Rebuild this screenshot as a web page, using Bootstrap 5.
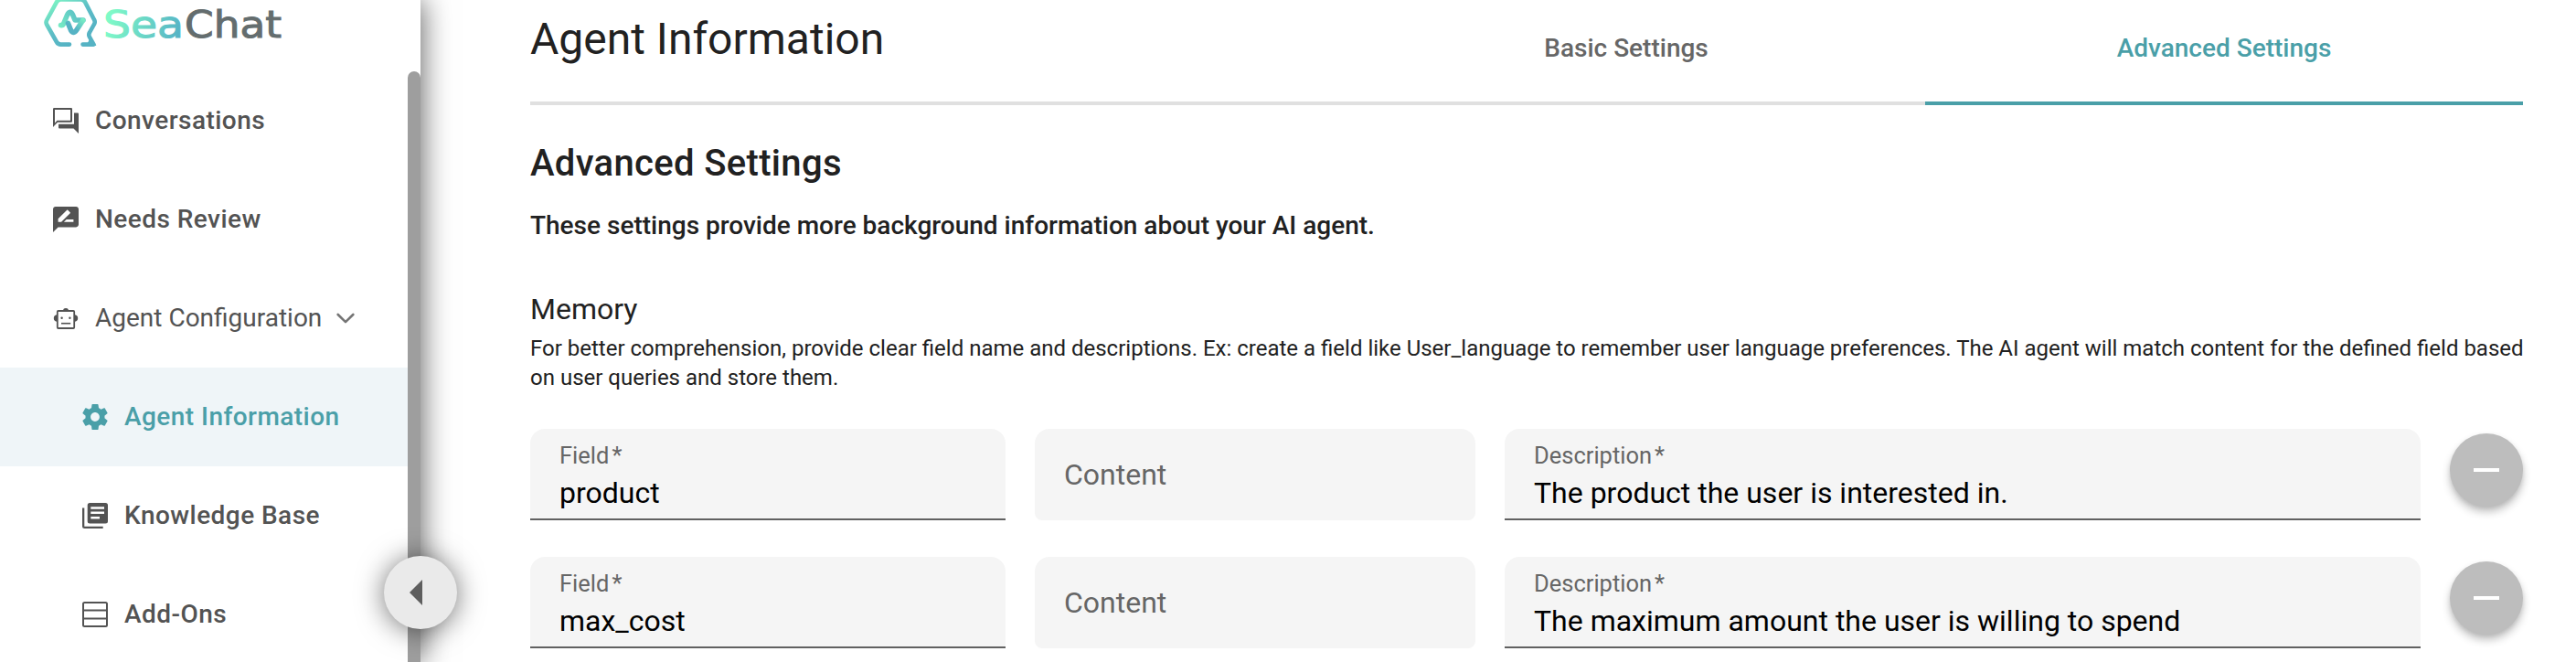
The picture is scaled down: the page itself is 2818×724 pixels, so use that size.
<!DOCTYPE html>
<html lang="en">
<head>
<meta charset="utf-8">
<title>SeaChat – Agent Information</title>
<meta name="viewport" content="width=device-width, initial-scale=1">
<link href="https://cdn.jsdelivr.net/npm/bootstrap@5.3.0/dist/css/bootstrap.min.css" rel="stylesheet">
<style>
  :root { --teal: #4a9fa8; --ink: #212121; --muted: #666; --nav: #535353; }
  body { font-family: Roboto, sans-serif; color: var(--ink); background: #fff; }
  .app { height: 724px; }

  /* Sidebar */
  .side { width: 460px; z-index: 2; background: #fff; box-shadow: 2px 0 30px rgba(0,0,0,.6); }
  .brand-row { height: 78px; padding-left: 46px; }
  .side-link { height: 108px; padding-left: 58px; gap: 18px; font-size: 28px; font-weight: 500; letter-spacing: .45px; color: var(--nav); white-space: nowrap; }
  .side-link:hover { color: var(--nav); }
  .side-link.group-toggle { font-weight: 400; letter-spacing: 0; }
  .side-link.sub { padding-left: 90px; }
  .side-link.current { background: #eff5f8; color: var(--teal); }
  .chev { margin-left: -2px; }
  .thumb { width: 14px; background: #9e9e9e; border-radius: 7px 7px 0 0; }
  .collapse-btn { width: 80px; height: 80px; right: -40px; top: 608px; background: #eaeaea; box-shadow: 0 2px 30px rgba(0,0,0,.55); }

  /* Main */
  .main { min-width: 0; padding-left: 120px; padding-right: 58px; }
  .head { height: 115px; }
  .head-title { font-size: 48px; line-height: 85px; border-bottom: 4px solid #e0e0e0; font-weight: 400; }
  .tab-item { width: 654px; padding: 0; font-size: 28px; line-height: 105px; font-weight: 500; color: var(--muted); border: 0; border-bottom: 4px solid #e0e0e0; }
  .tab-item.active { color: var(--teal); border-color: var(--teal); }
  .sec-title { font-size: 40px; line-height: 56px; font-weight: 500; letter-spacing: .33px; margin: 36px 0 20px; }
  .sec-lead { font-size: 28px; line-height: 40px; font-weight: 500; margin: 0 0 47px; }
  .sub-title { font-size: 32px; line-height: 48px; font-weight: 400; margin: 0 0 3px; }
  .hint { font-size: 24px; line-height: 32px; margin: 0 0 40px; white-space: nowrap; }
  .rows { gap: 40px; }
  .entry { display: grid; grid-template-columns: 520px 482px 1002px 80px; grid-template-rows: 100px; gap: 32px; height: 100px; }
  .fld { background: #f5f5f5; border-radius: 16px 16px 0 0; border-bottom: 2px solid #616161; padding: 15px 32px 0; white-space: nowrap; }
  .fld.off { border-bottom: 0; border-radius: 16px 16px 8px 8px; padding: 0 32px; font-size: 32px; line-height: 101px; color: var(--muted); height: 100px; }
  .fld-label { font-size: 25.5px; line-height: 28px; color: var(--muted); }
  .req { padding-left: 3px; }
  .fld-value { font-size: 32px; line-height: 54px; color: #000; }
  .minus { width: 80px; height: 80px; margin-top: 5px; background: #bdbdbd; box-shadow: 0 6px 10px rgba(0,0,0,.24), 0 2px 4px rgba(0,0,0,.08); }
</style>
</head>
<body>
<div class="app d-flex overflow-hidden">
  <aside class="side position-relative flex-shrink-0 d-flex">
    <div class="flex-grow-1">
      <div class="brand-row">
        <svg width="270" height="60" viewBox="46 0 270 60" role="img" aria-label="SeaChat">
          <defs>
            <linearGradient id="gHex" gradientUnits="userSpaceOnUse" x1="52" y1="4" x2="82" y2="44">
              <stop offset="0" stop-color="#7df6c4"/><stop offset=".6" stop-color="#5cbcc6"/><stop offset="1" stop-color="#56b3c4"/>
            </linearGradient>
            <linearGradient id="gSea" gradientUnits="userSpaceOnUse" x1="120" y1="18" x2="196" y2="40">
              <stop offset="0" stop-color="#7ffac8"/><stop offset="1" stop-color="#56b3c5"/>
            </linearGradient>
            <linearGradient id="gUp" gradientUnits="userSpaceOnUse" x1="65" y1="28" x2="82" y2="16">
              <stop offset="0" stop-color="#76ebc4"/><stop offset="1" stop-color="#60c6c6"/>
            </linearGradient>
            <linearGradient id="gDown" gradientUnits="userSpaceOnUse" x1="90" y1="20" x2="78" y2="36">
              <stop offset="0" stop-color="#78efc4"/><stop offset=".7" stop-color="#56b3c4"/>
            </linearGradient>
          </defs>
          <path d="M76 48.6H66.5Q63.5 48.6 62 46L51.2 27Q49.8 24.5 51.2 22L62 2.2Q63.5-.6 66.5-.6H88.500Q91.500-.6 93 2.200L103 21.500Q104.500 24 103 26.500L98 35.500Q96.500 38 98 40.500L102.500 48.600H90.500" fill="none" stroke="url(#gHex)" stroke-width="4.600" stroke-linecap="round" stroke-linejoin="round"/>
          <path d="M98.500 41.500L105.500 50H94.500Z" fill="#56b3c4"/>
          <path d="M66.500 27.500Q68.500 28 69.500 26L73.500 16.500Q76.500 10.500 79.500 16L82 22H91" fill="none" stroke="url(#gUp)" stroke-width="5.600" stroke-linecap="round" stroke-linejoin="round"/>
          <path d="M74.500 25.500L77.500 33Q80.500 38 84 32.500L90.500 22.500" fill="none" stroke="url(#gDown)" stroke-width="5.600" stroke-linecap="round" stroke-linejoin="round"/>
          <g font-family="DejaVu Sans, sans-serif" font-size="40" stroke-width="1">
            <text x="113" y="41" textLength="88" lengthAdjust="spacingAndGlyphs" fill="url(#gSea)" stroke="url(#gSea)">Sea</text>
            <text x="202" y="41" textLength="106" lengthAdjust="spacingAndGlyphs" fill="#646d6e" stroke="#646d6e">Chat</text>
          </g>
        </svg>
      </div>
      <nav class="nav flex-column flex-nowrap">
        <a class="side-link d-flex align-items-center text-decoration-none" href="#">
          <svg width="28" height="28" viewBox="0 0 28 28" fill="currentColor" aria-hidden="true"><path fill-rule="evenodd" d="M0 21V1.200Q0 0 1.200 0H20Q21 0 21 1.200V14.500Q21 15.700 20 15.700H5ZM2 2V16.500L4.500 13.800H19V2Z"/><path d="M23 5.500h4q1 0 1 1V28l-5.500-5.500H7q-1 0-1-1v-3.700h17z"/></svg>
          <span>Conversations</span>
        </a>
        <a class="side-link d-flex align-items-center text-decoration-none" href="#">
          <svg width="28" height="28" viewBox="2 2 20 20" fill="currentColor" aria-hidden="true"><path d="M20 2H4c-1.100 0-1.990.9-1.990 2L2 22l4-4h14c1.100 0 2-.9 2-2V4c0-1.100-.9-2-2-2zM6 14v-2.470l6.880-6.880c.2-.2.510-.2.710 0l1.770 1.770c.2.2.2.510 0 .710L8.470 14H6zm12 0h-7.500l2-2H18v2z"/></svg>
          <span>Needs Review</span>
        </a>
        <a class="side-link group-toggle d-flex align-items-center text-decoration-none" href="#">
          <svg width="28" height="28" viewBox="0 0 28 28" fill="currentColor" aria-hidden="true"><path d="M10.800 5.500a3.300 3.300 0 0 1 6.400 0zM4 10.300v7.500a3.800 3.800 0 0 1 0-7.500zM24 10.300v7.500a3.800 3.800 0 0 0 0-7.500z"/><rect x="4.800" y="6" width="18.400" height="19" rx="1" fill="none" stroke="currentColor" stroke-width="1.800"/><circle cx="9.600" cy="13.700" r="1.200"/><circle cx="18.400" cy="13.700" r="1.200"/><rect x="9" y="18.900" width="10.200" height="1.600"/></svg>
          <span>Agent Configuration</span>
          <svg class="chev" width="20" height="14" viewBox="0 0 20 14" fill="none" stroke="#757575" stroke-width="2.600" stroke-linecap="round" stroke-linejoin="round" aria-hidden="true"><path d="M1.700 3L10 11.200L18.300 3"/></svg>
        </a>
        <a class="side-link sub current d-flex align-items-center text-decoration-none" href="#">
          <svg width="28" height="28" viewBox="2 2 20 20" fill="currentColor" aria-hidden="true"><path d="M19.430 12.980c.04-.320.070-.640.070-.980s-.030-.660-.070-.980l2.110-1.650c.190-.150.240-.420.120-.640l-2-3.460c-.120-.220-.390-.300-.610-.220l-2.490 1c-.520-.400-1.080-.730-1.690-.980l-.380-2.650C14.460 2.180 14.250 2 14 2h-4c-.250 0-.460.180-.490.420l-.380 2.650c-.610.250-1.170.590-1.690.980l-2.490-1c-.230-.090-.490 0-.610.220l-2 3.460c-.130.220-.070.490.120.640l2.110 1.650c-.040.320-.070.650-.070.980s.030.660.070.980l-2.110 1.650c-.190.150-.240.420-.120.640l2 3.460c.120.220.390.300.610.220l2.490-1c.520.400 1.080.730 1.690.980l.380 2.650c.030.240.240.420.490.420h4c.250 0 .460-.180.490-.420l.380-2.650c.610-.250 1.170-.590 1.690-.980l2.490 1c.230.090.490 0 .610-.220l2-3.460c.120-.220.070-.490-.120-.640l-2.110-1.650zM12 15.500c-1.930 0-3.500-1.570-3.500-3.500s1.570-3.500 3.500-3.500 3.500 1.570 3.500 3.500-1.570 3.500-3.500 3.500z"/></svg>
          <span>Agent Information</span>
        </a>
        <a class="side-link sub d-flex align-items-center text-decoration-none" href="#">
          <svg width="28" height="28" viewBox="0 0 28 28" fill="currentColor" aria-hidden="true"><path fill-rule="evenodd" d="M8.200 0H25.500Q28 0 28 2.500V20Q28 22.500 25.500 22.500H8.200Q5.700 22.500 5.700 20V2.500Q5.700 0 8.200 0ZM9.300 4.200V6.700H24V4.200ZM9.300 9.500V12H24V9.500ZM9.300 15V17.500H19V15Z"/><path d="M0 5.500H2.300V25.700H22.700V28H2.500Q0 28 0 25.500Z"/></svg>
          <span>Knowledge Base</span>
        </a>
        <a class="side-link sub d-flex align-items-center text-decoration-none" href="#">
          <svg width="28" height="28" viewBox="0 0 28 28" fill="none" stroke="currentColor" stroke-width="2" aria-hidden="true"><rect x="1" y="1" width="26" height="26" rx="1.500"/><path d="M1 9.500H27M1 18.500H27"/></svg>
          <span>Add-Ons</span>
        </a>
      </nav>
    </div>
    <div class="d-flex" style="padding-top:78px"><div class="thumb"></div></div>
    <button class="collapse-btn btn rounded-circle border-0 p-0 position-absolute" type="button" aria-label="Collapse menu">
      <svg class="d-block" width="80" height="80" viewBox="0 0 80 80" aria-hidden="true"><path d="M28 40L42 26V54Z" fill="#5e5e5e"/></svg>
    </button>
  </aside>

  <main class="main flex-grow-1">
    <div class="head d-flex align-items-stretch">
      <h1 class="head-title flex-grow-1 m-0">Agent Information</h1>
      <div class="tab-item text-center">Basic Settings</div>
      <div class="tab-item active text-center">Advanced Settings</div>
    </div>

    <h2 class="sec-title">Advanced Settings</h2>
    <p class="sec-lead">These settings provide more background information about your AI agent.</p>
    <h3 class="sub-title">Memory</h3>
    <p class="hint">For better comprehension, provide clear field name and descriptions. Ex: create a field like User_language to remember user language preferences. The AI agent will match content for the defined field based<br>on user queries and store them.</p>

    <div class="rows d-flex flex-column">
      <div class="entry">
        <div class="fld"><div class="fld-label">Field<span class="req">*</span></div><div class="fld-value">product</div></div>
        <div class="fld off">Content</div>
        <div class="fld"><div class="fld-label">Description<span class="req">*</span></div><div class="fld-value">The product the user is interested in.</div></div>
        <button class="minus btn rounded-circle border-0 p-0" type="button" aria-label="Remove field"><svg class="d-block" width="80" height="80" viewBox="0 0 80 80" aria-hidden="true"><path d="M26 38h28v4H26z" fill="#fff"/></svg></button>
      </div>
      <div class="entry">
        <div class="fld"><div class="fld-label">Field<span class="req">*</span></div><div class="fld-value">max_cost</div></div>
        <div class="fld off">Content</div>
        <div class="fld"><div class="fld-label">Description<span class="req">*</span></div><div class="fld-value">The maximum amount the user is willing to spend</div></div>
        <button class="minus btn rounded-circle border-0 p-0" type="button" aria-label="Remove field"><svg class="d-block" width="80" height="80" viewBox="0 0 80 80" aria-hidden="true"><path d="M26 38h28v4H26z" fill="#fff"/></svg></button>
      </div>
    </div>
  </main>
</div>
<script src="https://cdn.jsdelivr.net/npm/bootstrap@5.3.0/dist/js/bootstrap.bundle.min.js"></script>
</body>
</html>
